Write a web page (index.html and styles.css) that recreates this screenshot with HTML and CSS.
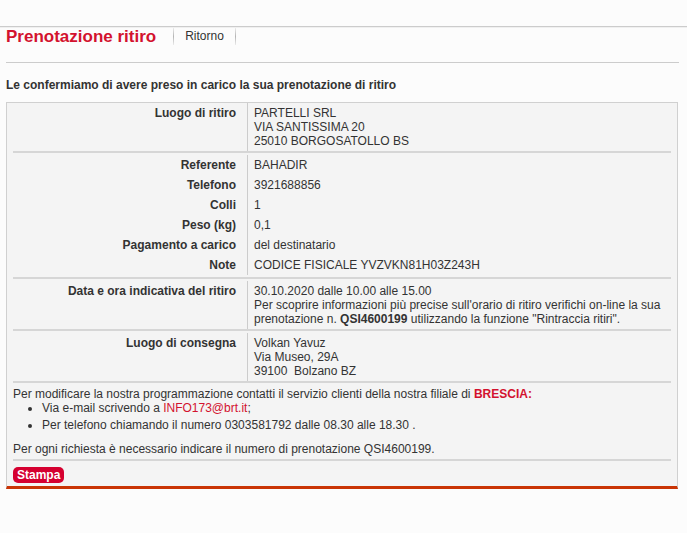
FILE: index.html
```html
<!DOCTYPE html>
<html lang="it">
<head>
  <meta charset="UTF-8">
  <title>Prenotazione ritiro</title>
  <link rel="stylesheet" href="styles.css">
</head>
<body>

  <div class="topbar"></div>

  <!-- Header -->
  <div class="header">
    <h1>Prenotazione ritiro</h1>
    <a class="tab" href="#">Ritorno</a>
  </div>
  <div class="rule"></div>

  <p class="intro">Le confermiamo di avere preso in carico la sua prenotazione di ritiro</p>

  <!-- Riepilogo -->
  <div class="box">
    <div class="section first tight">
      <div class="lbl">Luogo di ritiro</div>
      <div class="val">PARTELLI SRL<br>VIA SANTISSIMA 20<br>25010 BORGOSATOLLO BS</div>
    </div>

    <div class="section">
      <div class="lbl">Referente</div><div class="val">BAHADIR</div>
      <div class="lbl">Telefono</div><div class="val">3921688856</div>
      <div class="lbl">Colli</div><div class="val">1</div>
      <div class="lbl">Peso (kg)</div><div class="val">0,1</div>
      <div class="lbl">Pagamento a carico</div><div class="val">del destinatario</div>
      <div class="lbl">Note</div><div class="val">CODICE FISICALE YVZVKN81H03Z243H</div>
    </div>

    <div class="section tight">
      <div class="lbl">Data e ora indicativa del ritiro</div>
      <div class="val">30.10.2020 dalle 10.00 alle 15.00<br>Per scoprire informazioni più precise sull'orario di ritiro verifichi on-line la sua prenotazione n. <b>QSI4600199</b> utilizzando la funzione "Rintraccia ritiri".</div>
    </div>

    <div class="section tight">
      <div class="lbl">Luogo di consegna</div>
      <div class="val">Volkan Yavuz<br>Via Museo, 29A<br>39100&nbsp; Bolzano BZ</div>
    </div>

    <div class="notes">
      <p>Per modificare la nostra programmazione contatti il servizio clienti della nostra filiale di <b class="red">BRESCIA:</b></p>
      <ul>
        <li>Via e-mail scrivendo a <a class="red" href="#">INFO173@brt.it</a>;</li>
        <li>Per telefono chiamando il numero 0303581792 dalle 08.30 alle 18.30 .</li>
      </ul>
      <p>Per ogni richiesta è necessario indicare il numero di prenotazione QSI4600199.</p>
    </div>

    <div class="actions">
      <button class="btn">Stampa</button>
    </div>
  </div>

</body>
</html>
```

FILE: styles.css
```css
* { box-sizing: border-box; }

body {
  margin: 0;
  font-family: Arial, "Liberation Sans", sans-serif;
  font-size: 12px;
  line-height: 14px;
  color: #333;
  background: #fcfcfc;
}

.red { color: #d3122e; text-decoration: none; }

/* — HEADER ————————————— */
.topbar {
  height: 27px;
  border-bottom: 1px solid #ccc;
}
.header {
  display: flex;
  align-items: center;
  height: 17px;
  padding: 0 6px;
  border-top: 1px solid #f0f0f0;
}
.header h1 {
  margin: 0;
  font-size: 17px;
  line-height: 17px;
  color: #d3122e;
}
.tab {
  margin-left: 17px;
  padding: 0 11px;
  line-height: 17px;
  color: #333;
  text-decoration: none;
  border-left: 1px solid #ccc;
  border-right: 1px solid #ccc;
  border-image: linear-gradient(#f2f2f2, #b5b5b5 50%, #f2f2f2) 1;
}
.rule {
  margin: 18px 8px 0 6px;
  border-top: 1px solid #ccc;
}
.intro {
  margin: 15px 6px 10px;
  font-weight: bold;
}

/* — RIEPILOGO ————————————— */
.box {
  margin: 0 9px 0 6px;
  padding: 0 6px;
  background: #f4f4f4;
  border: 1px solid #d0d0d0;
  border-bottom: 3px solid #c93405;
}
.section {
  display: grid;
  grid-template-columns: 234px 1fr;
  padding: 2px 0;
  border-bottom: 2px solid #d6d6d6;
}
.section.tight { padding-bottom: 0; }
.section.first { padding-top: 0; }
.lbl {
  padding: 3px 11px 3px 0;
  text-align: right;
  font-weight: bold;
}
.val {
  padding: 3px 6px;
  border-left: 1px solid #ccc;
}

/* — NOTE ————————————— */
.notes {
  padding: 4px 0 3px;
  border-bottom: 2px solid #d6d6d6;
}
.notes p { margin: 0; }
.notes ul {
  margin: 0 0 10px;
  padding-left: 29px;
}
.notes li + li { margin-top: 3px; }

.actions { padding: 6px 0 3px; }
.btn {
  font: bold 12px/14px Arial, "Liberation Sans", sans-serif;
  color: #fff;
  background: #d50030;
  border: none;
  border-radius: 5px;
  padding: 1px 4px;
  cursor: pointer;
}
```
